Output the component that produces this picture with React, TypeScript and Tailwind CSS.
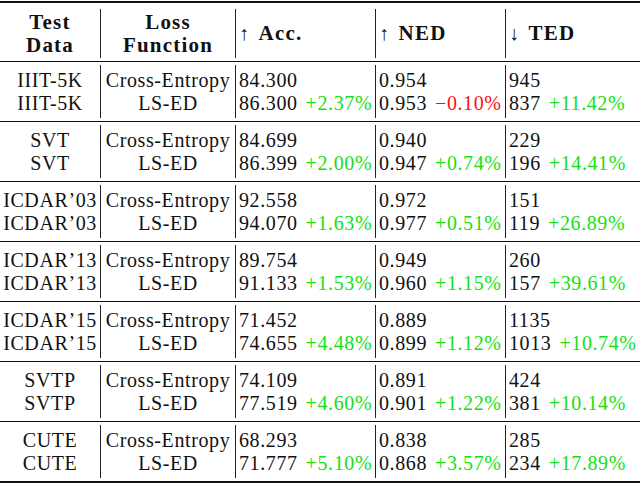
const groups = [
  { name: "IIIT-5K", ce: ["84.300", "0.954", "945"], ls: ["86.300", "0.953", "837"], d: [["+2.37%", 1], ["\u22120.10%", 0], ["+11.42%", 1]] },
  { name: "SVT", ce: ["84.699", "0.940", "229"], ls: ["86.399", "0.947", "196"], d: [["+2.00%", 1], ["+0.74%", 1], ["+14.41%", 1]] },
  { name: "ICDAR\u201903", ce: ["92.558", "0.972", "151"], ls: ["94.070", "0.977", "119"], d: [["+1.63%", 1], ["+0.51%", 1], ["+26.89%", 1]] },
  { name: "ICDAR\u201913", ce: ["89.754", "0.949", "260"], ls: ["91.133", "0.960", "157"], d: [["+1.53%", 1], ["+1.15%", 1], ["+39.61%", 1]] },
  { name: "ICDAR\u201915", ce: ["71.452", "0.889", "1135"], ls: ["74.655", "0.899", "1013"], d: [["+4.48%", 1], ["+1.12%", 1], ["+10.74%", 1]] },
  { name: "SVTP", ce: ["74.109", "0.891", "424"], ls: ["77.519", "0.901", "381"], d: [["+4.60%", 1], ["+1.22%", 1], ["+10.14%", 1]] },
  { name: "CUTE", ce: ["68.293", "0.838", "285"], ls: ["71.777", "0.868", "234"], d: [["+5.10%", 1], ["+3.57%", 1], ["+17.89%", 1]] },
] as const;

const cols = "grid grid-cols-[100px_135px_140px_130px_1fr]";

function Rule({ thick = false }: { thick?: boolean }) {
  return <div className={thick ? "h-[2px] bg-[#111]" : "h-px bg-[#111]"} />;
}

function Group({ g }: { g: (typeof groups)[number] }) {
  return (
    <div className={`${cols} h-[59px] py-[3px] leading-[23px]`}>
      <div className="flex flex-col justify-center items-center">
        <span>{g.name}</span>
        <span>{g.name}</span>
      </div>
      <div className="flex flex-col justify-center items-center border-l border-[#222]">
        <span>Cross-Entropy</span>
        <span>LS-ED</span>
      </div>
      {[0, 1, 2].map((i) => (
        <div key={i} className="flex flex-col justify-center border-l border-[#222] pl-[3px] whitespace-nowrap">
          <span>{g.ce[i]}</span>
          <span>
            {g.ls[i]}
            <span className={g.d[i][1] ? "ml-[8px] text-[#16e016]" : "ml-[8px] text-[#ff1010]"}>{g.d[i][0]}</span>
          </span>
        </div>
      ))}
    </div>
  );
}

export default function App() {
  return (
    <div className="w-[640px] h-[484px] bg-white pt-px text-[#111] text-[20px] tracking-[0.6px] font-['Liberation_Serif',serif]">
      <Rule thick />
      <div className={`${cols} h-[58px] pt-[6px] pb-[3px] leading-[23px]`}>
        <div className="flex flex-col justify-center items-center font-bold text-[21px] tracking-[1.2px]">
          <span>Test</span>
          <span>Data</span>
        </div>
        <div className="flex flex-col justify-center items-center border-l border-[#222] font-bold text-[21px] tracking-[1.2px]">
          <span>Loss</span>
          <span>Function</span>
        </div>
        <div className="flex items-center border-l border-[#222] pl-[3px]">
          <span>↑</span>
          <span className="ml-[9px] font-bold text-[21px] tracking-[1.2px]">Acc.</span>
        </div>
        <div className="flex items-center border-l border-[#222] pl-[3px]">
          <span>↑</span>
          <span className="ml-[9px] font-bold text-[21px] tracking-[1.2px]">NED</span>
        </div>
        <div className="flex items-center border-l border-[#222] pl-[3px]">
          <span>↓</span>
          <span className="ml-[9px] font-bold text-[21px] tracking-[1.2px]">TED</span>
        </div>
      </div>
      {groups.map((g) => (
        <div key={g.name}>
          <Rule />
          <Group g={g} />
        </div>
      ))}
      <Rule thick />
    </div>
  );
}
